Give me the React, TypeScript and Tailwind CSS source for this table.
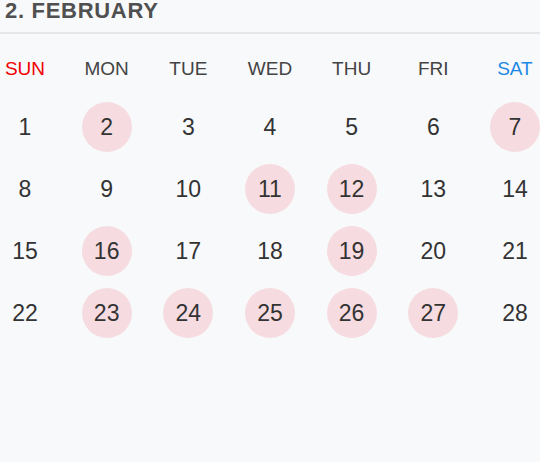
import React from 'react';

const days = ['SUN', 'MON', 'TUE', 'WED', 'THU', 'FRI', 'SAT'];
const marked = [2, 7, 11, 12, 16, 19, 23, 24, 25, 26, 27];

export default function App() {
  const weeks: number[][] = [];
  for (let w = 0; w < 4; w++) {
    weeks.push(Array.from({ length: 7 }, (_, i) => w * 7 + i + 1));
  }

  return (
    <main className="min-h-[462px] w-[540px] bg-[#f8f9fb] font-['Liberation_Sans',Arial,sans-serif]">
      <div className="border-b-2 border-[#e6e7ea] px-[5px] pb-[10px]">
        <h1 className="text-[22px] font-bold leading-[22px] tracking-[0.7px] text-[#505050]">2. FEBRUARY</h1>
      </div>
      <div className="flex justify-between pt-[25px]">
        {days.map((d, i) => (
          <div
            key={d}
            className={`w-[50px] text-center text-[19px] leading-[20px] ${
              i === 0 ? 'text-[#f00000]' : i === 6 ? 'text-[#1e88e5]' : 'text-[#444]'
            }`}
          >
            {d}
          </div>
        ))}
      </div>
      <div className="mt-[23px] flex flex-col gap-[12px]">
        {weeks.map((week, wi) => (
          <div key={wi} className="flex justify-between">
            {week.map((n) => (
              <div
                key={n}
                className={`flex h-[50px] w-[50px] items-center justify-center rounded-full text-[23px] text-[#333] ${
                  marked.includes(n) ? 'bg-[#f6dce0]' : ''
                }`}
              >
                {n}
              </div>
            ))}
          </div>
        ))}
      </div>
    </main>
  );
}
